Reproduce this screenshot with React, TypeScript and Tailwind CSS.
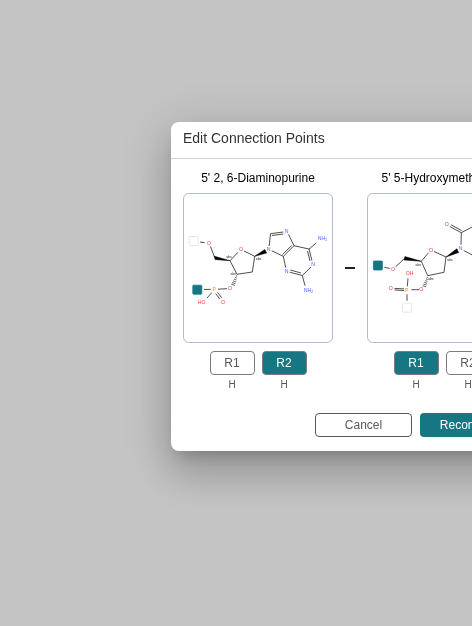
import type { ReactNode } from "react";

const bond = { stroke: "#222", strokeWidth: 0.8, fill: "none" };
const fontStack = "font-['Liberation_Sans',Arial,sans-serif]";

type AtomProps = { x: number; y: number; kind: "O" | "N" | "P"; children?: ReactNode };

const atomColors = { O: "#ff3333", N: "#4a5cff", P: "#f09020" };

function Atom({ x, y, kind, children }: AtomProps) {
  return (
    <text x={x} y={y + 1.9} fontSize="5.2" textAnchor="middle" fill={atomColors[kind]}>
      {children ?? kind}
    </text>
  );
}

function Abs({ x, y }: { x: number; y: number }) {
  return (
    <text x={x} y={y} fontSize="3.4" fill="#222">
      abs
    </text>
  );
}

function Amine({ x, y }: { x: number; y: number }) {
  return (
    <Atom x={x} y={y} kind="N">
      NH
      <tspan fontSize="3.6" dy="1">
        2
      </tspan>
    </Atom>
  );
}

function Attachment({ x, y, active }: { x: number; y: number; active?: boolean }) {
  return (
    <rect
      x={x}
      y={y}
      width="9"
      height="9"
      rx="0.8"
      fill={active ? "#167782" : "#fff"}
      stroke={active ? "#167782" : "#e1e1e1"}
      strokeWidth="0.8"
    />
  );
}

function Diaminopurine() {
  return (
    <svg viewBox="0 0 148 148" className="block h-full w-full" role="img" aria-label="2, 6-Diaminopurine structure">
      <path
        {...bond}
        d="M16 48 20.7 48.7M26.5 52.5 30.7 63.7M46 66.7 54 58.3M60 57 70.7 62.3 68.3 78 53 80.3 46 66.7M43 94.7 34 95.2M26.7 95.3 20 95.5M27.7 98.7 23 104M31.7 99.5 35.7 105M33.5 98.3 37.7 103.7"
      />
      <path
        {...bond}
        d="M85.2 52 86.5 39.7 99.3 38M88 41.5 99.3 40M104.5 40.3 110 51.7 99.3 62.3 87.8 56.8M107.7 51.5 98.5 60.5M99.3 62.3 101.7 73.7M105.7 78.2 118.3 81.5 127 73M106.3 76 117 79M118.3 81.5 121 91.7M127.9 66.5 125 55 110 51.7M126 67 123.5 57M125 55 132.3 49"
      />
      <path d="M46 66.7 30.4 62.2 31 65.6ZM70.7 62.3 80.8 55.4 82.6 59Z" fill="#000" stroke="#000" strokeWidth="0.5" />
      <path {...bond} strokeWidth="0.7" d="M52 81.7 53.2 82.2M51 83.4 52.9 84.1M50 85.1 52.4 86M48.9 86.8 51.9 88M48 88.5 51.4 89.8M47.2 90.1 50.8 91.5" />
      <Attachment x={5.2} y={42.5} />
      <Attachment x={8.8} y={91.2} active />
      <Atom x={25} y={49} kind="O" />
      <Atom x={57} y={55.2} kind="O" />
      <Atom x={46} y={94} kind="O" />
      <Atom x={30.3} y={95.3} kind="P" />
      <Atom x={17.6} y={108} kind="O">HO</Atom>
      <Atom x={39} y={108} kind="O" />
      <Atom x={84.7} y={55.3} kind="N" />
      <Atom x={102.7} y={37.3} kind="N" />
      <Atom x={102.7} y={77} kind="N" />
      <Atom x={129} y={70} kind="N" />
      <Amine x={138.4} y={44.5} />
      <Amine x={124.5} y={96.3} />
      <Abs x={42.2} y={64.2} />
      <Abs x={46.5} y={80.8} />
      <Abs x={71.8} y={66} />
    </svg>
  );
}

function Hydroxymethyl() {
  return (
    <svg viewBox="0 0 148 148" className="block h-full w-full" role="img" aria-label="5-Hydroxymethyl structure">
      <path
        {...bond}
        d="M16.3 73.2 21.7 74.5M27.7 72.7 36.3 64.7M53.3 67.3 60.5 58.7M66 57.5 78 63 76 78.3 59.7 81.7 53.3 67.3M51 95.7 43.3 95.7M26.5 94.4 36 94.9M26.5 96 36 96.5M39.3 92.3 40 84.3M39 100.3 39 106.8"
      />
      <path {...bond} d="M93 50.7 93.3 38.7 81.7 32.5M93.8 36.6 83 30.8M93.3 38.7 106 32M95.7 56.5 108 63 122 55 123 39 112 32" />
      <path d="M53.3 67.3 36.9 62.6 36 66ZM78 63 88.8 54.8 90.7 58.5Z" fill="#000" stroke="#000" strokeWidth="0.5" />
      <path {...bond} strokeWidth="0.7" d="M58.8 83.2 60 83.6M58 84.9 59.7 85.5M57.1 86.6 59.4 87.4M56.2 88.3 59 89.3M55.3 90 58.5 91.1M54.6 91.6 57.9 92.8" />
      <Attachment x={5.4} y={67} active />
      <Attachment x={34.5} y={109.2} />
      <Atom x={25} y={75.3} kind="O" />
      <Atom x={63} y={56} kind="O" />
      <Atom x={78.8} y={30} kind="O" />
      <Atom x={53.3} y={95.3} kind="O" />
      <Atom x={22.7} y={94.3} kind="O" />
      <Atom x={41.7} y={79.3} kind="O">OH</Atom>
      <Atom x={38.8} y={96} kind="P" />
      <Atom x={92.5} y={54.3} kind="N" />
      <Atom x={109} y={30.5} kind="N" />
      <Abs x={47.6} y={71.6} />
      <Abs x={79.3} y={66.8} />
      <Abs x={60} y={85.8} />
    </svg>
  );
}

type MonomerProps = { name: string; selected: "R1" | "R2"; children: ReactNode };

function Monomer({ name, selected, children }: MonomerProps) {
  return (
    <section className="w-[150px]">
      <h3 className="h-[22px] overflow-hidden text-center text-[12px] leading-[14px] whitespace-nowrap text-black">{name}</h3>
      <div className="h-[150px] rounded-[6px] border border-[#b4b9d6]">{children}</div>
      <div className="mt-2 flex justify-center gap-[7px]">
        {["R1", "R2"].map((point) => (
          <div key={point} className="flex w-[45px] flex-col items-center">
            <button
              type="button"
              aria-pressed={point === selected}
              className={
                point === selected
                  ? "h-6 w-full rounded-[4px] border border-[#7c7c7c] bg-[#167782] text-[12px] leading-[14px] text-white"
                  : "h-6 w-full rounded-[4px] border border-[#7c7c7c] bg-white text-[12px] leading-[14px] text-[#585858]"
              }
            >
              {point}
            </button>
            <span className="mt-1 text-[10px] leading-[12px] text-[#585858]">H</span>
          </div>
        ))}
      </div>
    </section>
  );
}

export default function App() {
  return (
    <main className={`flex min-h-screen items-start overflow-hidden bg-[#c4c4c4] pt-[122px] pl-[171px] ${fontStack}`}>
      <div
        role="dialog"
        aria-labelledby="dialog-title"
        className="shrink-0 rounded-[8px] bg-white shadow-[0_11px_15px_-7px_rgba(0,0,0,0.2),0_24px_38px_3px_rgba(0,0,0,0.14),0_9px_46px_8px_rgba(0,0,0,0.12)] will-change-transform"
      >
        <header className="border-b border-[#cad3dd] px-3 pt-2 pb-3">
          <h2 id="dialog-title" className="text-[14px] leading-[16px] text-[#333]">
            Edit Connection Points
          </h2>
        </header>
        <div className="flex gap-3 px-3 pt-3">
          <Monomer name="5' 2, 6-Diaminopurine" selected="R2">
            <Diaminopurine />
          </Monomer>
          <div className="mt-[22px] flex h-[150px] items-center">
            <div className="h-[2px] w-[10px] bg-[#222]" />
          </div>
          <Monomer name="5' 5-Hydroxymethyl dU" selected="R1">
            <Hydroxymethyl />
          </Monomer>
        </div>
        <footer className="flex justify-end gap-2 px-3 pt-[22px] pb-[14px]">
          <button type="button" className="h-6 w-[97px] rounded-[4px] border border-[#585858] bg-white text-[12px] leading-[14px] text-[#585858]">
            Cancel
          </button>
          <button type="button" className="h-6 w-[97px] rounded-[4px] bg-[#167782] text-[12px] leading-[14px] text-white">
            Reconnect
          </button>
        </footer>
      </div>
    </main>
  );
}
